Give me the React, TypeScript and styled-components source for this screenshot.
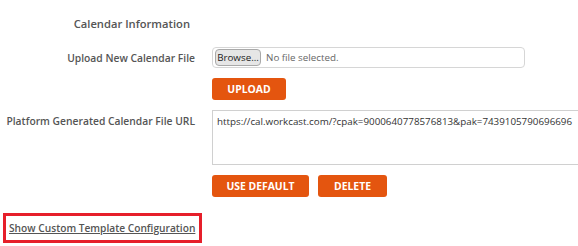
import React from 'react'
import styled, { createGlobalStyle } from 'styled-components'

const GlobalStyle = createGlobalStyle`
  body {
    margin: 0;
    background: #fff;
    font-family: 'Open Sans', 'Liberation Sans', sans-serif;
    overflow: hidden;
  }
`

const Form = styled.div`
  display: flex;
  flex-direction: column;
  gap: 10px;
  padding-top: 10px;
  width: 578px;
  overflow: hidden;
`

const Row = styled.div<{ $top?: boolean; $height?: number }>`
  display: grid;
  grid-template-columns: 212px 1fr;
  align-items: ${(p) => (p.$top ? 'start' : 'center')};
  min-height: ${(p) => (p.$height ? `${p.$height}px` : 'auto')};
`

const Label = styled.div<{ $offset?: number }>`
  text-align: right;
  padding-right: 17px;
  padding-top: ${(p) => p.$offset ?? 0}px;
  font-size: 10.3px;
  font-weight: 600;
  line-height: 16px;
  color: #555;
  white-space: nowrap;
`

const Heading = styled.div`
  text-align: right;
  padding-right: 22px;
  font-size: 11.2px;
  font-weight: 600;
  line-height: 16px;
  color: #555;
  white-space: nowrap;
`

const Field = styled.div`
  display: flex;
  gap: 9px;
  align-items: center;
`

const FileBox = styled.div`
  box-sizing: border-box;
  display: flex;
  align-items: center;
  gap: 5px;
  width: 313px;
  height: 21px;
  padding: 0 2px;
  border: 1px solid #d6d6d6;
  border-radius: 4px;
  background: #fff;
`

const BrowseButton = styled.button`
  box-sizing: border-box;
  width: 46px;
  height: 17px;
  padding: 0;
  border: 1px solid #a9a9a9;
  border-radius: 4px;
  background: #e6e6e6;
  color: #222;
  font-family: inherit;
  font-size: 9.8px;
  line-height: 15px;
  cursor: pointer;
`

const FileName = styled.span`
  font-size: 9.8px;
  color: #666;
`

const OrangeButton = styled.button<{ $width: number }>`
  box-sizing: border-box;
  width: ${(p) => p.$width}px;
  height: 22px;
  padding: 0;
  border: none;
  border-radius: 3px;
  background: #e4550f;
  color: #fff;
  font-family: inherit;
  font-size: 10.4px;
  font-weight: 700;
  text-transform: uppercase;
  cursor: pointer;
`

const UrlArea = styled.textarea`
  box-sizing: border-box;
  width: 420px;
  height: 55px;
  padding: 3px 4px;
  border: 1px solid #d0d0d0;
  resize: none;
  overflow: hidden;
  font-family: inherit;
  font-size: 9.8px;
  line-height: 15px;
  color: #333;
  outline: none;
`

const LinkBox = styled.div`
  box-sizing: border-box;
  width: 199px;
  height: 30px;
  margin: 6px 0 0 3px;
  border: 3px solid #e61f2a;
  display: flex;
  align-items: center;
  padding-left: 3px;
`

const Link = styled.a`
  font-size: 10.2px;
  font-weight: 600;
  color: #555;
  text-decoration: underline;
  white-space: nowrap;
  cursor: pointer;
`

const App: React.FC = () => {
  const url = 'https://cal.workcast.com/?cpak=9000640778576813&pak=7439105790696696'
  return (
    <>
      <GlobalStyle />
      <Form>
        <Row $height={27}>
          <Heading>Calendar Information</Heading>
        </Row>
        <Row>
          <Label>Upload New Calendar File</Label>
          <FileBox>
            <BrowseButton>Browse...</BrowseButton>
            <FileName>No file selected.</FileName>
          </FileBox>
        </Row>
        <Row>
          <div />
          <Field>
            <OrangeButton $width={74}>Upload</OrangeButton>
          </Field>
        </Row>
        <Row $top>
          <Label $offset={3}>Platform Generated Calendar File URL</Label>
          <UrlArea readOnly value={url} />
        </Row>
        <Row>
          <div />
          <Field>
            <OrangeButton $width={97}>Use Default</OrangeButton>
            <OrangeButton $width={69}>Delete</OrangeButton>
          </Field>
        </Row>
        <LinkBox>
          <Link>Show Custom Template Configuration</Link>
        </LinkBox>
      </Form>
    </>
  )
}

export default App
